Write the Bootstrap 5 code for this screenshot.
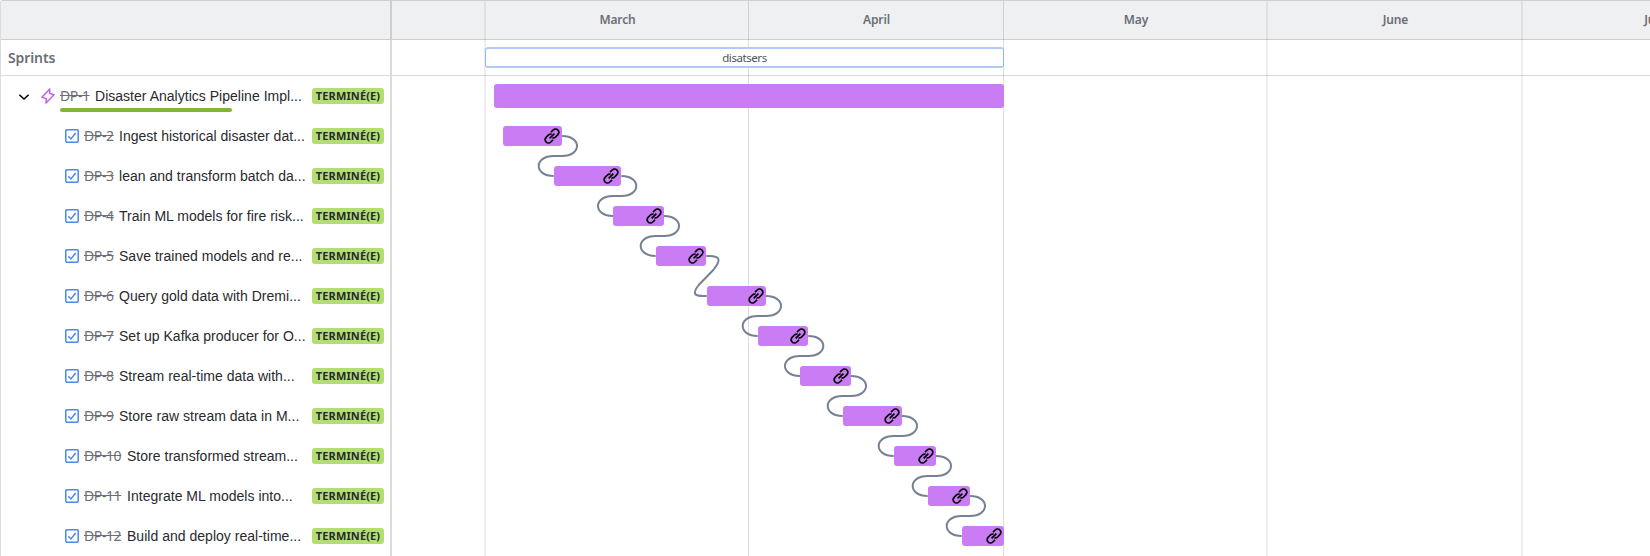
<!DOCTYPE html>
<html lang="fr">
<head>
<meta charset="utf-8">
<meta name="viewport" content="width=device-width, initial-scale=1">
<title>Timeline</title>
<link href="https://cdn.jsdelivr.net/npm/bootstrap@5.3.0/dist/css/bootstrap.min.css" rel="stylesheet">
<style>
body{background:#fff;color:#292a2e;font-family:"Noto Sans","Open Sans",sans-serif;font-size:14px;line-height:20px;overflow:hidden}
.board{height:556px;border-top:1px solid #d0d0d2;border-left:1px solid #dcdcde;border-top-left-radius:3px}
.side{width:391px;border-right:2px solid #dcdcde}
.head-row{height:39px;background:#eff0f2;border-bottom:1px solid #cccdcf}
.side .head-row{margin-right:-2px;border-right:2px solid #cdced0}
.sprint-row{height:36px;border-bottom:1px solid #dadadc}
.sprint-title{font-weight:600;font-size:14px;color:#6b6e76;padding-left:7px;letter-spacing:-.1px}
.issue{height:40px;padding-right:6px}
.issue-key{color:#6b6e76;text-decoration:line-through;font-size:14px;letter-spacing:-.4px;margin-right:4px;width:31px;white-space:nowrap}
.issue-key.wide{width:39px}
.issue-title{font-family:"Liberation Sans",Arial,sans-serif;font-size:14px;white-space:nowrap;letter-spacing:.02px}
.status{width:72px;height:16px;border-radius:3px;background:#b3df72;color:#292a2e;font-size:11px;font-weight:700;line-height:16px;text-align:center;letter-spacing:.12px;white-space:nowrap}
.epic-progress{left:59px;top:32px;width:172px;height:4px;border-radius:2px;background:#82b536}
.month{font-size:12px;font-weight:600;color:#6b6e76;flex:none;letter-spacing:-.15px}
.gridline{top:0;bottom:0;width:1px;background:rgba(11,18,14,.14)}
.gridline.soft{width:2px;background:rgba(11,18,14,.07)}
.sprint-pill{height:21px;margin-left:93px;width:519px;border:1px solid #8fb8f6;border-width:2px 1px;border-top-color:#aecbfa;border-bottom-color:#aecbfa;border-radius:3px;background:#fff;font-size:11.5px;letter-spacing:-.43px;color:#505258;line-height:17px;text-align:center;position:relative;z-index:1}
.lane{height:40px}
.task-bar{height:20px;border-radius:3px;background:#c97cf4;padding-right:2px}
.task-bar.epic{height:24px;padding:0}
.links{left:0;top:75px}
</style>
</head>
<body>
<div class="board d-flex">
  <aside class="side flex-shrink-0">
    <div class="head-row"></div>
    <div class="sprint-row d-flex align-items-center sprint-title">Sprints</div>
    <div id="issues"></div>
  </aside>
  <main class="flex-grow-1 position-relative overflow-hidden">
    <div class="head-row d-flex align-items-center text-center">
      <div class="month" style="width:94px"></div>
      <div class="month" style="width:263px">March</div>
      <div class="month" style="width:255px">April</div>
      <div class="month" style="width:264px">May</div>
      <div class="month" style="width:255px">June</div>
      <div class="month" style="width:263px">July</div>
    </div>
    <div class="sprint-row d-flex align-items-center"><div class="sprint-pill">disatsers</div></div>
    <div class="gridline soft position-absolute" style="left:92px"></div>
    <div class="gridline position-absolute" style="left:356px"></div>
    <div class="gridline position-absolute" style="left:611px"></div>
    <div class="gridline soft position-absolute" style="left:874px"></div>
    <div class="gridline soft position-absolute" style="left:1129px"></div>
    <svg class="links position-absolute" id="links" width="1258" height="480" fill="none" stroke="#758195" stroke-width="2"></svg>
    <div id="lanes" class="position-relative"></div>
  </main>
</div>
<script>
const tasks=[
 ["DP-1","Disaster Analytics Pipeline Impl...",494,1004],
 ["DP-2","Ingest historical disaster dat...",502.7,562],
 ["DP-3","lean and transform batch da...",553.7,621.3],
 ["DP-4","Train ML models for fire risk...",613,664],
 ["DP-5","Save trained models and re...",655.7,706.3],
 ["DP-6","Query gold data with Dremi...",706.7,766],
 ["DP-7","Set up Kafka producer for O...",757.7,808.3],
 ["DP-8","Stream real-time data with...",800,851],
 ["DP-9","Store raw stream data in M...",842.7,902],
 ["DP-10","Store transformed stream...",893.7,936],
 ["DP-11","Integrate ML models into...",927.7,970],
 ["DP-12","Build and deploy real-time...",961.7,1004]];
const X0=392;
const check='<svg class="flex-shrink-0" width="14" height="14" viewBox="0 0 14 14" fill="none" stroke="#4688ec" stroke-width="1.5" style="margin:0 5px 0 64px"><rect x=".75" y=".75" width="12.5" height="12.5" rx="1.2"/><path d="M3.3 7.2 5.9 9.9 10.7 4"/></svg>';
const bolt='<svg class="flex-shrink-0" width="10" height="10" viewBox="0 0 10 10" fill="none" stroke="#000" stroke-width="1.6" style="margin:1px 0 0 18px"><path d="M.3 2.8 5 7 9.7 2.8"/></svg><svg class="flex-shrink-0" width="14" height="16" viewBox="0 0 14 16" fill="none" stroke="#bf63f3" stroke-width="1.5" stroke-linejoin="round" style="margin:0 5px 0 12px"><path d="M8.8 .9 .9 9.2 5.3 10.6 5 15.1 13 6.8 8.6 5.4Z"/></svg>';
const link='<svg width="16" height="16" viewBox="0 0 16 16" fill="none" stroke="#000" stroke-width="1.7"><path d="M7 4.2 9.2 2A3.2 3.2 0 0 1 13.9 6.7L11.6 9A3.2 3.2 0 0 1 8.4 9.8M9 11.8 6.8 14A3.2 3.2 0 0 1 2.1 9.3L4.4 7A3.2 3.2 0 0 1 7.6 6.2M5.6 10.4 10.4 5.6"/></svg>';
let side='',lanes='',paths='';
tasks.forEach(([k,t,a,b],i)=>{
 side+=`<div class="issue d-flex align-items-center position-relative">${i?check:bolt}<span class="issue-key${i>8?' wide':''}">${k}</span><span class="issue-title">${t}</span><span class="status ms-auto flex-shrink-0">TERMINÉ(E)</span>${i?'':'<div class="epic-progress position-absolute"></div>'}</div>`;
 lanes+=`<div class="lane d-flex align-items-center"><div class="task-bar d-flex align-items-center justify-content-end${i?'':' epic'}" style="margin-left:${a-X0}px;width:${b-a}px">${i?link:''}</div></div>`;
 if(i&&i<11){const s=b-X0,e=tasks[i+1][2]-X0,y=i*40+20;
  paths+=i==4?`<path d="M${s} ${y}h3C${s+14} ${y} ${s+15} ${y+4} ${s+7} ${y+14}L${e-8} ${y+29}C${e-15} ${y+38} ${e-12} ${y+40} ${e-3} ${y+40}h3"/>`
  :`<path d="M${s} ${y}C${s+10} ${y} ${s+15} ${y+5} ${s+15} ${y+10}S${s+10} ${y+20} ${s} ${y+20}H${e}C${e-10} ${y+20} ${e-15} ${y+25} ${e-15} ${y+30}S${e-10} ${y+40} ${e} ${y+40}"/>`;}
});
document.getElementById('issues').innerHTML=side;
document.getElementById('lanes').innerHTML=lanes;
document.getElementById('links').innerHTML=paths;
</script>
<script src="https://cdn.jsdelivr.net/npm/bootstrap@5.3.0/dist/js/bootstrap.bundle.min.js"></script>
</body>
</html>
